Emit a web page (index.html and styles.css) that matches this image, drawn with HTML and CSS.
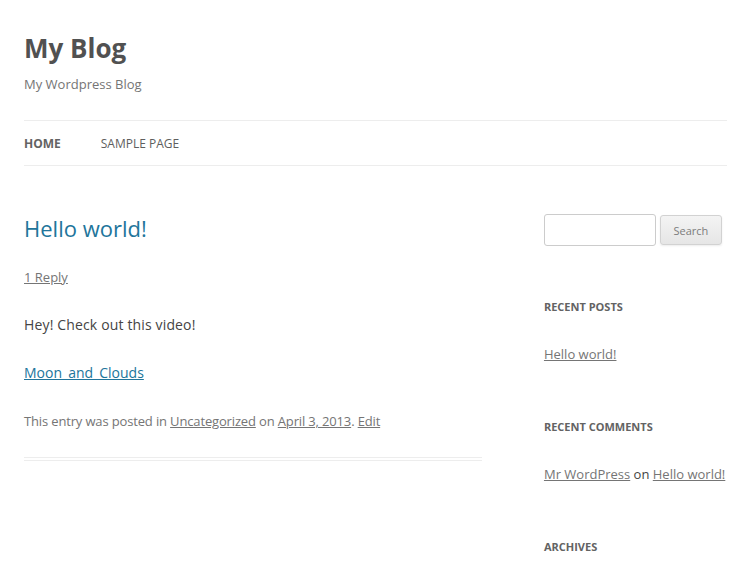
FILE: index.html
```html
<!DOCTYPE html>
<html lang="en">
<head>
<meta charset="utf-8">
<title>My Blog</title>
<link rel="stylesheet" href="styles.css">
</head>
<body>
<div class="site">
  <header class="site-header">
    <h1 class="site-title"><a href="#">My Blog</a></h1>
    <h2 class="site-description">My Wordpress Blog</h2>
    <nav class="main-navigation">
      <ul class="nav-menu">
        <li class="current"><a href="#">Home</a></li>
        <li><a href="#">Sample Page</a></li>
      </ul>
    </nav>
  </header>
  <div class="main">
    <div class="site-content">
      <article class="post">
        <header class="entry-header">
          <h1 class="entry-title"><a href="#">Hello world!</a></h1>
          <div class="comments-link"><a href="#">1 Reply</a></div>
        </header>
        <div class="entry-content">
          <p>Hey! Check out this video!</p>
          <p><a href="#">Moon_and_Clouds</a></p>
        </div>
        <footer class="entry-meta">This entry was posted in <a href="#">Uncategorized</a> on <a href="#">April 3, 2013</a>. <a href="#">Edit</a></footer>
      </article>
    </div>
    <aside class="widget-area">
      <div class="widget widget-search">
        <form class="searchform">
          <input type="text" class="search-input">
          <input type="submit" class="search-submit" value="Search">
        </form>
      </div>
      <div class="widget">
        <h3 class="widget-title">Recent Posts</h3>
        <ul>
          <li><a href="#">Hello world!</a></li>
        </ul>
      </div>
      <div class="widget">
        <h3 class="widget-title">Recent Comments</h3>
        <ul>
          <li><a href="#">Mr WordPress</a> on <a href="#">Hello world!</a></li>
        </ul>
      </div>
      <div class="widget">
        <h3 class="widget-title">Archives</h3>
      </div>
    </aside>
  </div>
</div>
</body>
</html>
```

FILE: styles.css
```css
* { box-sizing: border-box; }
html, body { margin: 0; padding: 0; }
body {
  font-family: "Open Sans", "Liberation Sans", sans-serif;
  color: #444;
  background: #fff;
  font-size: 14px;
  line-height: 1.714285714;
  overflow: hidden;
}
h1, h2, h3, p, ul { margin: 0; padding: 0; }
ul { list-style: none; }
.site { padding: 0 24px; }
.site-header { padding: 24px 0; }
.site-title {
  font-size: 26px;
  line-height: 48px;
  font-weight: bold;
}
.site-title a { color: #515151; text-decoration: none; }
.site-description {
  font-size: 13px;
  line-height: 24px;
  font-weight: normal;
  color: #757575;
}
.main-navigation { margin-top: 24px; }
.nav-menu {
  display: flex;
  border-top: 1px solid #ededed;
  border-bottom: 1px solid #ededed;
}
.nav-menu li {
  margin-right: 40px;
  font-size: 12px;
  line-height: 44px;
  padding-top: 1px;
  margin-bottom: -1px;
  text-transform: uppercase;
}
.nav-menu a { color: #5e5e5e; text-decoration: none; }
.nav-menu .current a { color: #636363; font-weight: bold; }
.main {
  display: flex;
  justify-content: space-between;
  align-items: flex-start;
}
.site-content { width: 65.104166667%; margin-top: 24px; }
.widget-area { width: 26.041666667%; margin-top: 24px; }
.post {
  padding-bottom: 24px;
  border-bottom: 4px double #ededed;
}
.entry-header { margin-bottom: 24px; padding-top: 2px; }
.entry-title {
  font-size: 22px;
  line-height: 24px;
  font-weight: normal;
  padding-bottom: 1px;
}
.entry-title a { color: #21759b; text-decoration: none; }
.comments-link {
  margin-top: 24px;
  font-size: 13px;
  line-height: 24px;
}
.comments-link a { color: #757575; }
.entry-content p { margin-bottom: 24px; line-height: 24px; }
.entry-content p:first-child { letter-spacing: 0.15px; }
.entry-content a { color: #21759b; }
.entry-meta {
  font-size: 13px;
  line-height: 24px;
  color: #757575;
  letter-spacing: -0.15px;
}
.entry-meta a { color: #757575; }
.widget {
  margin-bottom: 48px;
  font-size: 13px;
  line-height: 24px;
}
.widget a { color: #757575; }
.widget-title {
  font-size: 11px;
  line-height: 24px;
  font-weight: bold;
  text-transform: uppercase;
  color: #636363;
  padding-top: 1px;
  margin-bottom: 23px;
}
.searchform { display: flex; align-items: center; gap: 4px; }
.search-input {
  width: 112px;
  height: 32px;
  padding: 6px;
  border: 1px solid #ccc;
  border-radius: 3px;
  font-family: inherit;
  font-size: 13px;
}
.search-submit {
  width: 62px;
  height: 30px;
  padding: 6px 10px;
  font-family: inherit;
  font-size: 11px;
  color: #7c7c7c;
  background: linear-gradient(#f4f4f4, #e6e6e6);
  border: 1px solid #d2d2d2;
  border-radius: 3px;
  box-shadow: 0 1px 2px rgba(64, 64, 64, 0.1);
}
```
